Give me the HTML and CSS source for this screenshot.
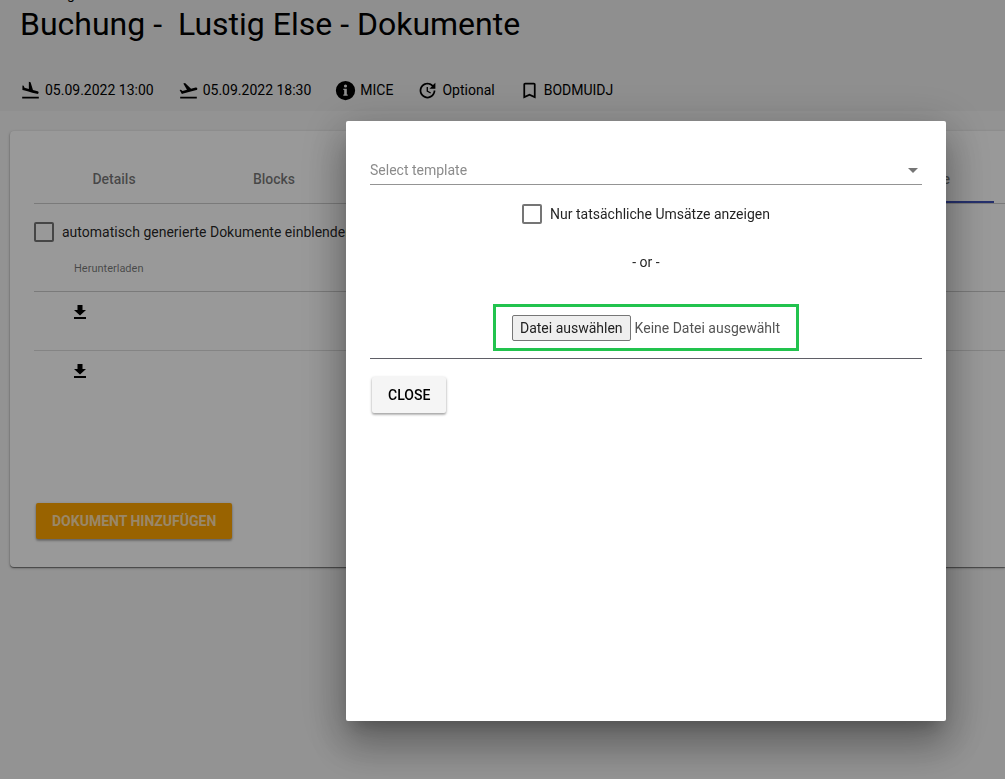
FILE: index.html
```html
<!DOCTYPE html>
<html lang="de">
<head>
  <meta charset="UTF-8">
  <meta name="viewport" content="width=device-width, initial-scale=1.0">
  <title>Buchung - Dokumente</title>
  <link rel="stylesheet" href="styles.css">
</head>
<body>
  <header class="header">
    <div class="breadcrumb">Buchung</div>
    <h1 class="title">Buchung -&nbsp; Lustig Else - Dokumente</h1>
    <ul class="infos">
      <li class="info">
        <svg class="icon" viewBox="0 0 24 24"><path d="M2.5 19h19v2h-19zm7.18-5.73l4.35 1.16 5.31 1.42c.8.21 1.62-.26 1.84-1.06.21-.8-.26-1.62-1.06-1.84l-5.31-1.42-2.76-9.02L10.12 2v8.28L5.15 8.95l-.93-2.32-1.45-.39v5.17l1.6.43 5.31 1.43z"/></svg>
        05.09.2022 13:00
      </li>
      <li class="info">
        <svg class="icon" viewBox="0 0 24 24"><path d="M2.5 19h19v2h-19zm19.57-9.36c-.21-.8-1.04-1.28-1.84-1.06L14.92 10l-6.9-6.43-1.93.51 4.14 7.17-4.97 1.33-1.97-1.54-1.45.39 1.82 3.16.77 1.33 1.6-.43 5.31-1.42 4.35-1.16L21 11.49c.81-.23 1.28-1.05 1.07-1.85z"/></svg>
        05.09.2022 18:30
      </li>
      <li class="info">
        <svg class="icon" viewBox="0 0 24 24"><path d="M12 1a11 11 0 1 0 0 22 11 11 0 0 0 0-22zm2.500 17h-5v-1.500h1v-5h-1V10h4v6.500h1zM12 5a1.800 1.800 0 1 1 0 3.600A1.800 1.800 0 0 1 12 5z"/></svg>
        MICE
      </li>
      <li class="info">
        <svg class="icon" viewBox="0 0 24 24"><path d="M21 10.120h-6.780l2.740-2.820c-2.730-2.700-7.150-2.800-9.880-.1-2.730 2.710-2.730 7.080 0 9.790s7.150 2.710 9.880 0C18.320 15.650 19 14.080 19 12.100h2c0 1.980-.88 4.550-2.640 6.290-3.510 3.480-9.210 3.480-12.720 0-3.500-3.470-3.530-9.110-.02-12.580s9.140-3.470 12.650 0L21 3v7.120zM12.500 8v4.250l3.500 2.080-.72 1.210L11 13V8h1.500z"/></svg>
        Optional
      </li>
      <li class="info">
        <svg class="icon" viewBox="0 0 24 24"><path d="M17 3H7c-1.100 0-1.990.9-1.990 2L5 21l7-3 7 3V5c0-1.100-.9-2-2-2zm0 15l-5-2.180L7 18V5h10v13z"/></svg>
        BODMUIDJ
      </li>
    </ul>
  </header>

  <main class="card">
    <nav class="tabs">
      <a class="tab" href="#details">Details</a>
      <a class="tab" href="#blocks">Blocks</a>
      <a class="tab aktiv" href="#dokumente">Dokumente</a>
    </nav>
    <label class="check">
      <input type="checkbox" class="checkbox">
      automatisch generierte Dokumente einblenden
    </label>
    <table class="tabelle">
      <thead>
        <tr><th>Herunterladen</th></tr>
      </thead>
      <tbody>
        <tr>
          <td>
            <a class="download" href="#" aria-label="Herunterladen"><svg viewBox="0 0 12 14"><path d="M3.500 0h5v5H12l-6 5.500L0 5h3.500zM0 12h12v2H0z"/></svg></a>
          </td>
        </tr>
        <tr>
          <td>
            <a class="download" href="#" aria-label="Herunterladen"><svg viewBox="0 0 12 14"><path d="M3.500 0h5v5H12l-6 5.500L0 5h3.500zM0 12h12v2H0z"/></svg></a>
          </td>
        </tr>
      </tbody>
    </table>
    <button class="botton hinzufuegen">DOKUMENT HINZUFÜGEN</button>
  </main>

  <div class="overlay">
    <div class="dialog" role="dialog" aria-modal="true">
      <div class="select-feld">
        <select class="select" aria-label="Select template">
          <option>Select template</option>
        </select>
      </div>
      <label class="check mitte">
        <input type="checkbox" class="checkbox">
        Nur tatsächliche Umsätze anzeigen
      </label>
      <p class="oder">- or -</p>
      <div class="upload">
        <div class="datei">
          <input type="file" id="datei" class="datei-input">
          <label class="datei-button" for="datei">Datei auswählen</label>
          <span>Keine Datei ausgewählt</span>
        </div>
      </div>
      <button class="botton close">CLOSE</button>
    </div>
  </div>
</body>
</html>
```
FILE: styles.css
```css
* {
  box-sizing: border-box;
}

body {
  margin: 0;
  min-height: 100vh;
  overflow: hidden;
  font-family: Roboto, "Liberation Sans", sans-serif;
  font-size: 14px;
  line-height: 20px;
  color: rgba(0, 0, 0, 0.87);
  background-color: #f5f5f5;
}

.header {
  margin-top: -16px;
  padding: 0 20px 9px;
  color: #000;
  background-color: #eee;
}

.breadcrumb {
  height: 20px;
}

.title {
  margin: 0;
  font-size: 32px;
  line-height: 40px;
  font-weight: 400;
}

.infos {
  display: flex;
  gap: 24px;
  margin: 0;
  padding: 34px 0 0;
  list-style: none;
}

.info {
  display: flex;
  align-items: center;
  gap: 4px;
  height: 24px;
  white-space: nowrap;
}

.icon {
  width: 21px;
  height: 21px;
}

.card {
  margin: 20px 0 0 10px;
  padding: 24px 0 28px 24px;
  border-radius: 4px 0 0 4px;
  background-color: #fff;
  box-shadow: 0 1px 3px rgba(0, 0, 0, 0.3), 0 1px 1px rgba(0, 0, 0, 0.4);
}

.tabs {
  display: grid;
  grid-template-columns: repeat(6, 160px);
  border-bottom: 1px solid #ccc;
}

.tab {
  height: 48px;
  line-height: 48px;
  text-align: center;
  font-weight: 500;
  text-decoration: none;
  color: rgba(0, 0, 0, 0.54);
}

.tab.aktiv {
  grid-column: 6;
  border-bottom: 2px solid #3f51b5;
}

.check {
  display: flex;
  align-items: center;
  gap: 8px;
  white-space: nowrap;
}

.card .check {
  margin-top: 18px;
}

.checkbox {
  appearance: none;
  width: 20px;
  height: 20px;
  margin: 0;
  border: 2px solid #757575;
  border-radius: 2px;
}

.checkbox:checked {
  background-color: #3f51b5;
}

.tabelle {
  width: 100%;
  border-collapse: collapse;
}

.tabelle th {
  height: 49px;
  padding: 6px 40px 0;
  text-align: left;
  font-size: 11px;
  font-weight: 400;
  color: rgba(0, 0, 0, 0.54);
  border-bottom: 1px solid #ccc;
}

.tabelle td {
  height: 59px;
  padding: 13px 40px;
  vertical-align: top;
}

.tabelle tr:first-child td {
  border-bottom: 1px solid #ddd;
}

.download {
  display: block;
  width: 12px;
}

.download svg {
  display: block;
  width: 12px;
  height: 14px;
}

.botton {
  height: 36px;
  padding: 0 16px;
  border: none;
  border-radius: 2px;
  font-family: inherit;
  font-size: 14px;
  font-weight: 500;
  cursor: pointer;
  box-shadow: 0 1px 3px rgba(0, 0, 0, 0.3), 0 2px 2px rgba(0, 0, 0, 0.15);
}

.hinzufuegen {
  display: block;
  margin: 94px 0 0 2px;
  font-weight: 700;
  color: rgba(255, 255, 255, 0.7);
  background-color: #ffa500;
}

.overlay {
  position: fixed;
  inset: 0;
  display: flex;
  justify-content: flex-end;
  align-items: flex-start;
  padding: 121px 59px 0;
  background-color: rgba(0, 0, 0, 0.4);
}

.dialog {
  width: 100%;
  max-width: 600px;
  min-height: 600px;
  padding: 35px 24px 24px;
  border-radius: 2px;
  background-color: #fff;
  box-shadow: 0 11px 15px -7px rgba(0, 0, 0, 0.2), 0 24px 38px 3px rgba(0, 0, 0, 0.24), 0 9px 46px 8px rgba(0, 0, 0, 0.16);
}

.select-feld {
  display: flex;
  align-items: center;
  border-bottom: 1px solid #949494;
}

.select-feld::after {
  content: "";
  margin: 0 4px 0 -14px;
  border: 5px solid transparent;
  border-top-color: #757575;
  border-bottom: none;
  pointer-events: none;
}

.select {
  appearance: none;
  flex: 1;
  height: 28px;
  padding: 0;
  border: none;
  font-family: inherit;
  font-size: 14px;
  color: #8c8c8c;
  background: none;
}

.mitte {
  justify-content: center;
  margin-top: 19px;
}

.oder {
  margin: 28px 0 32px;
  text-align: center;
}

.upload {
  display: flex;
  justify-content: center;
  padding-bottom: 7px;
  border-bottom: 1px solid #5f5f66;
}

.datei {
  position: relative;
  display: flex;
  align-items: center;
  gap: 4px;
  padding: 8px 16px 7px;
  border: 3px solid #22c34e;
  color: #555;
}

.datei-input {
  position: absolute;
  width: 1px;
  height: 1px;
  opacity: 0;
}

.datei-button {
  padding: 2px 7px;
  border: 1px solid #767676;
  border-radius: 2px;
  color: #222;
  background-color: #efefef;
  cursor: pointer;
}

.close {
  display: block;
  margin: 18px 0 0 2px;
  color: #000;
  background-color: #f5f5f5;
}
```
